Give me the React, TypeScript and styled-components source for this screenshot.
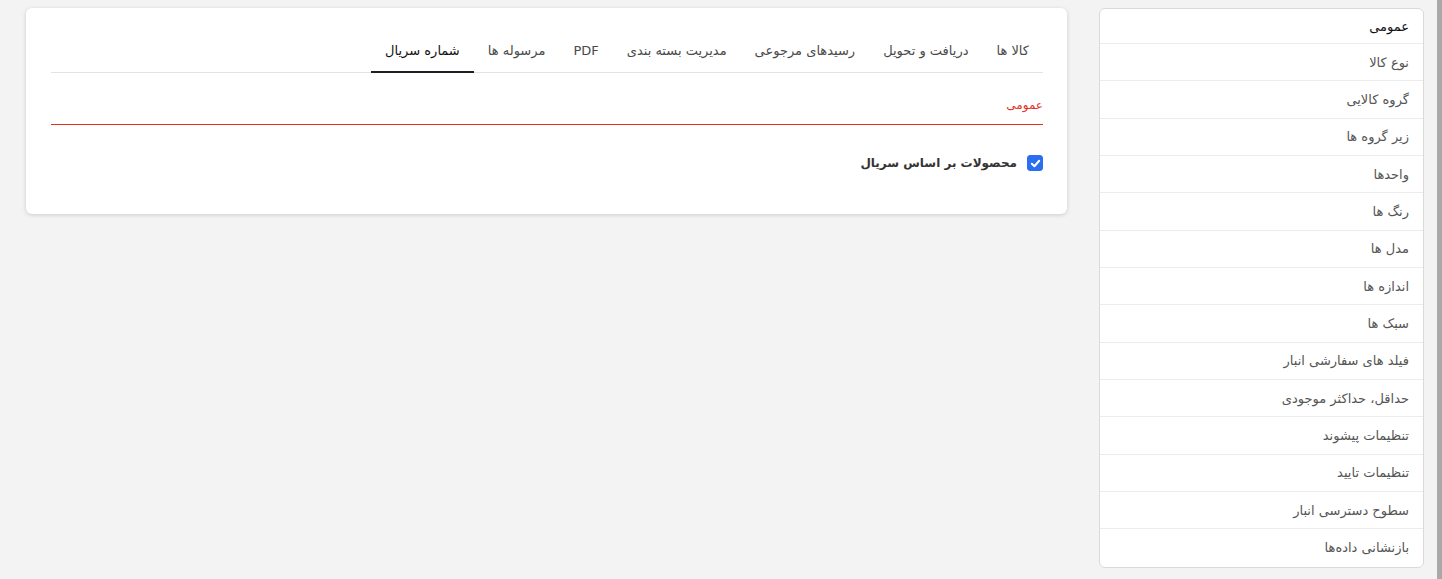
import { useState } from "react"
import styled, { createGlobalStyle } from "styled-components"

const GlobalStyles = createGlobalStyle`
  *,
  *::before,
  *::after {
    box-sizing: border-box;
    margin: 0;
    padding: 0;
  }

  body {
    margin: 0;
    background: #f3f3f3;
    font-family: "DejaVu Sans", "Noto Sans", sans-serif;
    font-size: 13px;
    color: #444;
  }
`

const StyledPage = styled.div`
  display: flex;
  min-height: 100vh;
  align-items: flex-start;
`

const StyledMain = styled.main`
  flex: 1;
  padding: 8px 32px 0 26px;
`

const StyledCard = styled.section`
  direction: rtl;
  background: #fff;
  border-radius: 6px;
  box-shadow: 0 1px 4px rgba(0, 0, 0, 0.16);
  padding: 21px 24px 41px 25px;
`

const StyledTabs = styled.nav`
  display: flex;
  border-bottom: 1px solid #e3e3e3;
`

const StyledTab = styled.button<{ $isActive: boolean }>`
  font: inherit;
  background: none;
  border: none;
  border-bottom: 2px solid ${(p) => (p.$isActive ? "#1d1f24" : "transparent")};
  margin-bottom: -1px;
  padding: 12px 14px 10px;
  line-height: 20px;
  color: ${(p) => (p.$isActive ? "#111" : "#4a4a4a")};
  cursor: pointer;
`

const StyledSection = styled.div`
  padding: 22px 0 9px;
  border-bottom: 1px solid #e3301f;
  color: #e3301f;
  font-size: 12px;
  line-height: 20px;
`

const StyledCheckRow = styled.label`
  display: flex;
  align-items: center;
  gap: 10px;
  margin-top: 28px;
  font-weight: 700;
  font-size: 12px;
  color: #333;
  line-height: 20px;
  cursor: pointer;
`

const StyledCheckbox = styled.span<{ $checked: boolean }>`
  width: 16px;
  height: 16px;
  border-radius: 3px;
  display: flex;
  align-items: center;
  justify-content: center;
  background: ${(p) => (p.$checked ? "#2b6ef2" : "#fff")};
  border: 1px solid ${(p) => (p.$checked ? "#2b6ef2" : "#999")};
`

const StyledSidebar = styled.aside`
  direction: rtl;
  width: 325px;
  margin-top: 8px;
  margin-right: 13px;
  background: #fff;
  border: 1px solid #dadada;
  border-radius: 6px;
  overflow: hidden;
`

const StyledSideItem = styled.div<{ $isActive: boolean; $first: boolean }>`
  height: ${(p) => (p.$first ? "35px" : "37.33px")};
  display: flex;
  align-items: center;
  padding: 0 14px;
  border-bottom: 1px solid #ececec;
  color: ${(p) => (p.$isActive ? "#111" : "#555")};
  cursor: pointer;

  &:last-child {
    border-bottom: none;
  }
`

const StyledScrollStrip = styled.div`
  width: 5px;
  align-self: stretch;
  background: #a9a9a9;
`

const tabs = [
  "کالا ها",
  "دریافت و تحویل",
  "رسیدهای مرجوعی",
  "مدیریت بسته بندی",
  "PDF",
  "مرسوله ها",
  "شماره سریال",
]

const sideItems = [
  "عمومی",
  "نوع کالا",
  "گروه کالایی",
  "زیر گروه ها",
  "واحدها",
  "رنگ ها",
  "مدل ها",
  "اندازه ها",
  "سبک ها",
  "فیلد های سفارشی انبار",
  "حداقل، حداکثر موجودی",
  "تنظیمات پیشوند",
  "تنظیمات تایید",
  "سطوح دسترسی انبار",
  "بازنشانی داده‌ها",
]

const App = () => {
  const [activeTab, setActiveTab] = useState(6)
  const [activeSide, setActiveSide] = useState(0)
  const [checked, setChecked] = useState(true)

  return (
    <>
      <GlobalStyles />
      <StyledPage>
        <StyledMain>
          <StyledCard>
            <StyledTabs>
              {tabs.map((tab, index) => (
                <StyledTab
                  key={tab}
                  $isActive={index === activeTab}
                  onClick={() => setActiveTab(index)}
                >
                  {tab}
                </StyledTab>
              ))}
            </StyledTabs>
            <StyledSection>عمومی</StyledSection>
            <StyledCheckRow onClick={() => setChecked(!checked)}>
              <StyledCheckbox $checked={checked}>
                {checked && (
                  <svg width="11" height="11" viewBox="0 0 12 12">
                    <path
                      d="M2 6.3 L4.8 9 L10 3"
                      fill="none"
                      stroke="#fff"
                      strokeWidth="2.2"
                      strokeLinecap="round"
                      strokeLinejoin="round"
                    />
                  </svg>
                )}
              </StyledCheckbox>
              محصولات بر اساس سریال
            </StyledCheckRow>
          </StyledCard>
        </StyledMain>
        <StyledSidebar>
          {sideItems.map((item, index) => (
            <StyledSideItem
              key={item}
              $first={index === 0}
              $isActive={index === activeSide}
              onClick={() => setActiveSide(index)}
            >
              {item}
            </StyledSideItem>
          ))}
        </StyledSidebar>
        <StyledScrollStrip />
      </StyledPage>
    </>
  )
}

export default App
